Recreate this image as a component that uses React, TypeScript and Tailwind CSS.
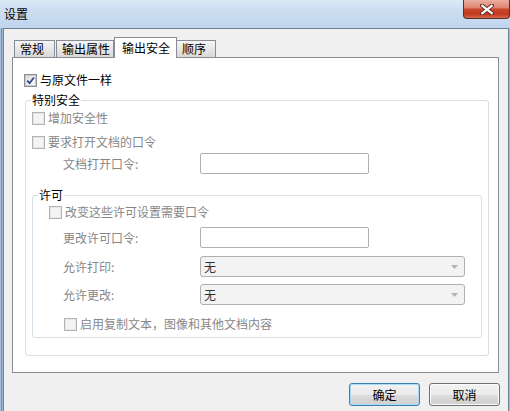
import React from "react";

function CheckBox({ checked = false, disabled = false }: { checked?: boolean; disabled?: boolean }) {
  return (
    <span
      className={`w-[13px] h-[13px] shrink-0 flex items-center justify-center border ${
        disabled ? "border-[#b4b4b4] bg-[#f4f4f4]" : "border-[#8e8f8f] bg-[#f4f4f4]"
      }`}
    >
      <span
        className={`w-[11px] h-[11px] flex items-center justify-center border ${
          disabled
            ? "border-[#e6e6e6] bg-[#f4f4f4]"
            : "border-[#c6cad0] bg-[linear-gradient(135deg,#dedede,#fbfbfb)]"
        }`}
      >
        {checked && (
          <svg width="9" height="9" viewBox="0 0 9 9">
            <path d="M1.2 4.6 L3.6 7.2 L7.9 1.4" fill="none" stroke="#2a4494" strokeWidth="1.7" />
          </svg>
        )}
      </span>
    </span>
  );
}

function CheckRow({
  label,
  checked = false,
  disabled = false,
  className = "",
}: {
  label: string;
  checked?: boolean;
  disabled?: boolean;
  className?: string;
}) {
  return (
    <div className={`flex items-center h-[16px] gap-[3px] ${className}`}>
      <CheckBox checked={checked} disabled={disabled} />
      <span className={disabled ? "text-[#878787]" : "text-black"}>{label}</span>
    </div>
  );
}

function TextField() {
  return <div className="w-[169px] h-[21px] border border-[#b0b0b0] rounded-[2px] bg-white" />;
}

function Select() {
  return (
    <div className="w-[265px] h-[21px] border border-[#b0b0b0] rounded-[3px] bg-[#f3f3f3] flex items-center pl-[3px] pr-[6px]">
      <span className="text-[#333333]">无</span>
      <svg className="ml-auto" width="7" height="4" viewBox="0 0 7 4">
        <path d="M0 0 H7 L3.5 4 Z" fill="#b4b4b4" />
      </svg>
    </div>
  );
}

export default function App() {
  return (
    <div className="w-[510px] h-[411px] overflow-hidden flex flex-col bg-[#bcd3ec] font-['Noto_Sans_CJK_SC','Microsoft_YaHei',sans-serif] text-[12px] leading-[16px] text-black">
      {/* Title bar */}
      <div className="h-[28px] shrink-0 flex items-start bg-[linear-gradient(to_bottom,#dce9f7_0%,#cadcf0_45%,#bfd5ed_100%)]">
        <span className="pl-[4px] pt-[6px] leading-[16px]">设置</span>
        <div className="ml-auto w-[47px] h-[19px] rounded-b-[4px] border border-t-0 border-[#56302a] bg-[linear-gradient(to_bottom,#eab0a3_0%,#df8571_42%,#c9472c_52%,#c13a1f_78%,#d8664a_100%)] flex items-center justify-center">
          <svg width="14" height="11" viewBox="0 0 14 11">
            <path d="M2 1.5 L12 9.5 M12 1.5 L2 9.5" stroke="#5a2a22" strokeWidth="4" strokeLinecap="square" />
            <path d="M2.3 1.8 L11.7 9.2 M11.7 1.8 L2.3 9.2" stroke="#ffffff" strokeWidth="2.2" strokeLinecap="square" />
          </svg>
        </div>
      </div>

      {/* Body */}
      <div className="flex flex-1 min-h-0">
        <div className="w-[3px] shrink-0 bg-[linear-gradient(to_right,#c4d8ee,#6f8fb3,#b6cde6)]" />
        <div className="w-[506px] shrink-0 border-t border-l border-r border-[#6e8193] bg-[#f0f0f0] flex flex-col pt-[8px] pl-[8px]">
          {/* Tabs */}
          <div className="flex items-end h-[20px] pl-[2px]">
            <div className="w-[41px] h-[17px] border border-b-0 border-[#898c95] bg-[linear-gradient(to_bottom,#f5f5f5,#e4e4e4_60%,#d9d9d9)] pl-[5px] flex items-center">
              常规
            </div>
            <div className="ml-[1px] w-[58px] h-[17px] border border-b-0 border-[#898c95] bg-[linear-gradient(to_bottom,#f5f5f5,#e4e4e4_60%,#d9d9d9)] pl-[5px] flex items-center">
              输出属性
            </div>
            <div className="relative z-10 w-[63px] h-[21px] mb-[-1px] border border-b-0 border-[#898c95] bg-white pl-[7px] flex items-center">
              输出安全
            </div>
            <div className="w-[39px] h-[17px] border border-b-0 border-l-0 border-[#898c95] bg-[linear-gradient(to_bottom,#f5f5f5,#e4e4e4_60%,#d9d9d9)] pl-[5px] flex items-center">
              顺序
            </div>
          </div>

          {/* Panel */}
          <div className="w-[487px] h-[316px] border border-[#898c95] bg-white flex flex-col">
            <CheckRow label="与原文件一样" checked className="mt-[14px] ml-[11px]" />

            <fieldset className="mt-[5px] ml-[12px] w-[464px] border border-[#d5dfe5] rounded-[3px] pb-[17px]">
              <legend className="ml-[5px] px-[1px] leading-[14px]">特别安全</legend>
              <CheckRow label="增加安全性" disabled className="mt-[3px] ml-[6px]" />
              <CheckRow label="要求打开文档的口令" disabled className="mt-[8px] ml-[6px]" />
              <div className="mt-[3px] ml-[37px] flex items-center">
                <span className="w-[137px] text-[#878787]">文档打开口令:</span>
                <TextField />
              </div>

              <fieldset className="mt-[14px] ml-[6px] w-[450px] border border-[#d5dfe5] rounded-[3px] pb-[5px]">
                <legend className="ml-[5px] px-[1px] leading-[14px]">许可</legend>
                <CheckRow label="改变这些许可设置需要口令" disabled className="mt-[2px] ml-[16px]" />
                <div className="mt-[7px] ml-[30px] flex items-center">
                  <span className="w-[137px] text-[#878787]">更改许可口令:</span>
                  <TextField />
                </div>
                <div className="mt-[8px] ml-[30px] flex items-center">
                  <span className="w-[137px] text-[#878787]">允许打印:</span>
                  <Select />
                </div>
                <div className="mt-[7px] ml-[30px] flex items-center">
                  <span className="w-[137px] text-[#878787]">允许更改:</span>
                  <Select />
                </div>
                <CheckRow label="启用复制文本，图像和其他文档内容" disabled className="mt-[11px] ml-[31px]" />
              </fieldset>
            </fieldset>
          </div>

          {/* Buttons */}
          <div className="mt-[10px] flex justify-end gap-[9px] pr-[8px]">
            <div className="w-[71px] h-[23px] rounded-[3px] border border-[#3c7fb1] shadow-[inset_0_0_0_1px_#a9dcf6] bg-[linear-gradient(to_bottom,#f2f2f2_0%,#ebebeb_50%,#dddddd_50%,#cfcfcf_100%)] flex items-center justify-center">
              确定
            </div>
            <div className="w-[71px] h-[23px] rounded-[3px] border border-[#707070] shadow-[inset_0_0_0_1px_#fcfcfc] bg-[linear-gradient(to_bottom,#f2f2f2_0%,#ebebeb_50%,#dddddd_50%,#cfcfcf_100%)] flex items-center justify-center">
              取消
            </div>
          </div>
        </div>
        <div className="w-[1px] shrink-0 bg-[#9fbad8]" />
      </div>
    </div>
  );
}
